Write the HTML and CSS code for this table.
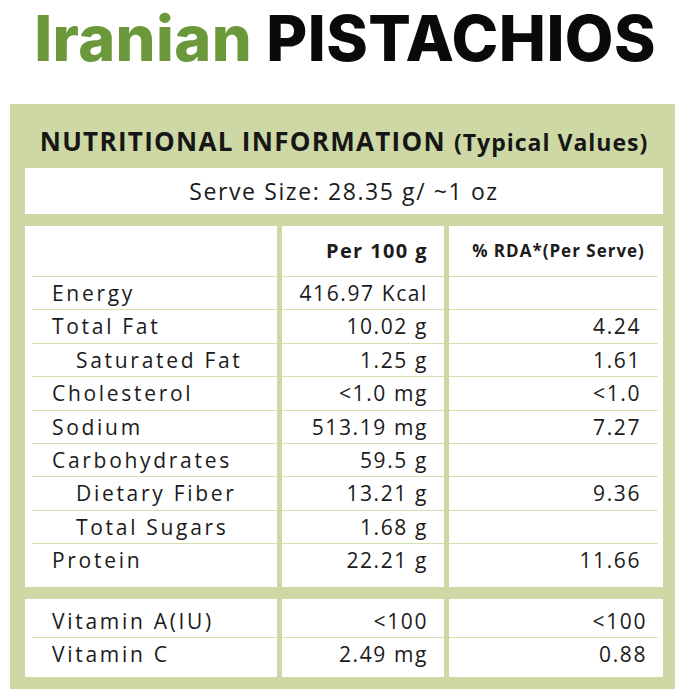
FILE: index.html
```html
<!DOCTYPE html>
<html lang="en">
<head>
<meta charset="utf-8">
<title>Iranian Pistachios – Nutritional Information</title>
<link rel="stylesheet" href="styles.css">
</head>
<body>
<h1 class="title"><span class="title-green">Iranian</span> <span class="title-black">PISTACHIOS</span></h1>
<section class="panel">
  <h2 class="panel-head">NUTRITIONAL INFORMATION <span class="panel-sub">(Typical Values)</span></h2>
  <div class="serve">Serve Size: 28.35 g/ ~1 oz</div>
  <div class="block block-main">
    <div class="col col-label">
      <div class="cell cell-head"></div>
      <div class="cell">Energy</div>
      <div class="cell">Total Fat</div>
      <div class="cell indent">Saturated Fat</div>
      <div class="cell">Cholesterol</div>
      <div class="cell">Sodium</div>
      <div class="cell">Carbohydrates</div>
      <div class="cell indent">Dietary Fiber</div>
      <div class="cell indent">Total Sugars</div>
      <div class="cell last">Protein</div>
    </div>
    <div class="col col-val">
      <div class="cell cell-head head-per">Per 100 g</div>
      <div class="cell">416.97 Kcal</div>
      <div class="cell">10.02 g</div>
      <div class="cell">1.25 g</div>
      <div class="cell">&lt;1.0 mg</div>
      <div class="cell">513.19 mg</div>
      <div class="cell">59.5 g</div>
      <div class="cell">13.21 g</div>
      <div class="cell">1.68 g</div>
      <div class="cell last">22.21 g</div>
    </div>
    <div class="col col-rda">
      <div class="cell cell-head head-rda">% RDA*(Per Serve)</div>
      <div class="cell"></div>
      <div class="cell">4.24</div>
      <div class="cell">1.61</div>
      <div class="cell">&lt;1.0</div>
      <div class="cell">7.27</div>
      <div class="cell"></div>
      <div class="cell">9.36</div>
      <div class="cell"></div>
      <div class="cell last">11.66</div>
    </div>
  </div>
  <div class="block block-vit">
    <div class="col col-label">
      <div class="cell">Vitamin A(IU)</div>
      <div class="cell last">Vitamin C</div>
    </div>
    <div class="col col-val">
      <div class="cell">&lt;100</div>
      <div class="cell last">2.49 mg</div>
    </div>
    <div class="col col-rda rda-vit">
      <div class="cell">&lt;100</div>
      <div class="cell last">0.88</div>
    </div>
  </div>
</section>
</body>
</html>
```

FILE: styles.css
```css
* { box-sizing: border-box; }

html, body {
  margin: 0;
  padding: 0;
  background: #ffffff;
}

body {
  width: 690px;
  height: 700px;
  overflow: hidden;
  font-family: "Open Sans", "Noto Sans", sans-serif;
  color: #1b1b1b;
}

.title {
  margin: 0;
  height: 104px;
  padding-top: 0;
  text-align: center;
  font-family: Inter, "Open Sans", sans-serif;
  font-size: 63px;
  font-weight: 800;
  line-height: 76px;
  letter-spacing: 0.4px;
}

.title-green { color: #6b983a; }
.title-black { color: #0a0a0a; }

.panel {
  margin: 0 15px 0 10px;
  background: #cdd8a4;
  padding: 0 12px 13px 15px;
  height: 585px;
}

.panel-head {
  margin: 0;
  height: 64px;
  padding-top: 8px;
  text-align: center;
  font-size: 26px;
  font-weight: 700;
  line-height: 58px;
  color: #161616;
  letter-spacing: 1.3px;
}

.panel-sub {
  font-size: 23px;
  letter-spacing: 1px;
}

.serve {
  background: #ffffff;
  height: 46px;
  line-height: 46px;
  text-align: center;
  font-size: 23px;
  font-weight: 500;
  letter-spacing: 1.6px;
  color: #1b1b1b;
}

.block {
  display: grid;
  grid-template-columns: 252px 162px 1fr;
  column-gap: 5px;
  margin-top: 12px;
}

.col {
  background: #ffffff;
  display: flex;
  flex-direction: column;
}

.cell {
  height: 33.4px;
  line-height: 33.4px;
  font-size: 21px;
  font-weight: 500;
  letter-spacing: 1.6px;
  border-bottom: 1.5px solid #d4e0ae;
  white-space: nowrap;
}

.cell.last { border-bottom: none; }

.cell-head {
  height: 51px;
  line-height: 50px;
  font-weight: 700;
}

.block-main .col { padding-bottom: 9px; }
.block-vit .col { padding-top: 6px; padding-bottom: 6px; }

.col-label { padding-left: 7px; }
.col-label .cell { padding-left: 20px; letter-spacing: 2.7px; }
.col-label .cell.indent { padding-left: 44px; }

.col-val .cell {
  text-align: right;
  padding-right: 16px;
}

.col-val .head-per {
  font-size: 20px;
  letter-spacing: 1.4px;
}

.col-rda { padding-right: 5px; }
.col-rda .cell {
  text-align: right;
  padding-right: 17px;
}

.col-rda .head-rda {
  text-align: center;
  padding-right: 0;
  padding-left: 10px;
  font-size: 17px;
  letter-spacing: 1px;
}

.rda-vit .cell { padding-right: 11px; }
```
